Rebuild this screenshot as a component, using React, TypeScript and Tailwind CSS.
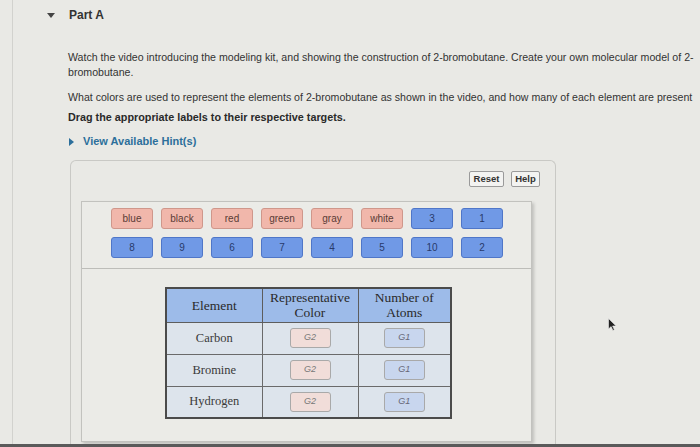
import React from "react";

const colors = ["blue", "black", "red", "green", "gray", "white"];
const row1Nums = ["3", "1"];
const row2 = ["8", "9", "6", "7", "4", "5", "10", "2"];

function Pink({ t }: { t: string }) {
  return (
    <div className="w-[42px] h-[21px] rounded-[3px] bg-[#f1b7ab] border border-[#cf978b] flex items-center justify-center text-[10px] text-[#5b3c36]">
      {t}
    </div>
  );
}
function Blue({ t }: { t: string }) {
  return (
    <div className="w-[42px] h-[21px] rounded-[3px] bg-[#7099e6] border border-[#4f76c8] flex items-center justify-center text-[10px] text-[#283a6b]">
      {t}
    </div>
  );
}
function G2() {
  return (
    <div className="mx-auto w-[41px] h-[20px] rounded-[3px] bg-[#f1ddd9] border border-[#a9a9a9] flex items-center justify-center text-[9px] italic text-[#777] font-['Liberation_Sans',sans-serif]">
      G2
    </div>
  );
}
function G1() {
  return (
    <div className="mx-auto w-[41px] h-[20px] rounded-[3px] bg-[#c8d6ee] border border-[#a9a9a9] flex items-center justify-center text-[9px] italic text-[#667] font-['Liberation_Sans',sans-serif]">
      G1
    </div>
  );
}

export default function App() {
  const rows = ["Carbon", "Bromine", "Hydrogen"];
  return (
    <div className="w-[700px] h-[447px] overflow-hidden bg-[#e9e9e5] flex flex-col font-['Liberation_Sans',Arial,sans-serif] text-[#2e2e2e] relative">
      <div className="flex-1 flex ml-[12px] border-l border-[#d2d2ce] min-h-0">
        <div className="flex-1 flex flex-col min-w-0">
          {/* header */}
          <div className="flex items-center h-[16px] mt-[7px]">
            <span className="ml-[33px] w-[9px] flex justify-center">
              <svg width="8" height="5" viewBox="0 0 8 5"><path d="M0 0h8L4 5z" fill="#444" /></svg>
            </span>
            <span className="ml-[14px] text-[12px] font-bold text-[#333]">Part A</span>
          </div>
          <div className="ml-[55px] mt-[27px] text-[10.6px] leading-[15px] text-[#333]">
            <div className="whitespace-nowrap">
              Watch the video introducing the modeling kit, and showing the construction of 2-bromobutane. Create your own molecular model of 2-
            </div>
            <div>bromobutane.</div>
          </div>
          <div className="ml-[55px] mt-[10px] text-[10.6px] leading-[15px] whitespace-nowrap text-[#333]">
            What colors are used to represent the elements of 2-bromobutane as shown in the video, and how many of each element are present
          </div>
          <div className="ml-[55px] mt-[5px] text-[10.8px] leading-[15px] font-bold whitespace-nowrap text-[#2a2a2a]">
            Drag the appropriate labels to their respective targets.
          </div>
          <div className="ml-[56px] mt-[9px] flex items-center h-[15px]">
            <svg width="5" height="8" viewBox="0 0 5 8"><path d="M0 0l5 4-5 4z" fill="#2c6f9b" /></svg>
            <span className="ml-[9px] text-[11px] font-bold text-[#2c6f9b]">View Available Hint(s)</span>
          </div>
          {/* outer box */}
          <div className="ml-[57px] mt-[11px] w-[486px] flex-1 flex flex-col border-t border-l border-r border-[#c9c9c5] rounded-t-[6px] min-h-0">
            <div className="flex justify-end gap-[7px] pr-[15px] pt-[10px]">
              <div className="h-[16px] w-[35px] flex items-center justify-center border border-[#9a9a9a] rounded-[2px] bg-[#f3f3f1] text-[9.5px] font-bold text-[#333]">Reset</div>
              <div className="h-[16px] w-[29px] flex items-center justify-center border border-[#9a9a9a] rounded-[2px] bg-[#f3f3f1] text-[9.5px] font-bold text-[#333]">Help</div>
            </div>
            <div className="ml-[10px] mt-[14px] mb-[2px] w-[451px] flex-1 flex flex-col border border-[#c2c2be] shadow-[2px_2px_3px_rgba(0,0,0,0.18)] bg-[#ebebe7]">
              <div className="pt-[6px] pb-[10px] pl-[29px] flex flex-col gap-[8px] border-b border-[#bdbdb9]">
                <div className="flex gap-[8px]">
                  {colors.map((c) => <Pink key={c} t={c} />)}
                  {row1Nums.map((n) => <Blue key={n} t={n} />)}
                </div>
                <div className="flex gap-[8px]">
                  {row2.map((n) => <Blue key={n} t={n} />)}
                </div>
              </div>
              <div className="pl-[83px] pt-[18px]">
                <table className="border-collapse border-2 border-[#4b4b4b] font-['Liberation_Serif','Times_New_Roman',serif] text-[#2a2a2a]">
                  <thead>
                    <tr className="bg-[#9dbbe9] h-[34px]">
                      <th className="w-[96px] border border-[#5d5d5d] font-normal text-[13.5px] leading-[15px]">Element</th>
                      <th className="w-[96px] border border-[#5d5d5d] font-normal text-[13.5px] leading-[15px]">Representative<br />Color</th>
                      <th className="w-[93px] border border-[#5d5d5d] font-normal text-[13.5px] leading-[15px]">Number of<br />Atoms</th>
                    </tr>
                  </thead>
                  <tbody>
                    {rows.map((r) => (
                      <tr key={r} className="bg-[#dde4ec] h-[32px]">
                        <td className="border border-[#6a6a6a] text-center text-[12.5px] text-[#3a3a3a]">{r}</td>
                        <td className="border border-[#6a6a6a]"><G2 /></td>
                        <td className="border border-[#6a6a6a]"><G1 /></td>
                      </tr>
                    ))}
                  </tbody>
                </table>
              </div>
            </div>
          </div>
        </div>
      </div>
      <div className="h-[3px] bg-[#5a5a5a]" />
      {/* mouse cursor */}
      <svg className="absolute left-[608px] top-[318px]" width="9" height="13" viewBox="0 0 9 13">
        <path d="M0.5 0.5v10.5l2.6-2.4 1.8 3.9 1.5-0.7-1.8-3.8h3.5z" fill="#222" stroke="#eee" strokeWidth="0.6" />
      </svg>
    </div>
  );
}
